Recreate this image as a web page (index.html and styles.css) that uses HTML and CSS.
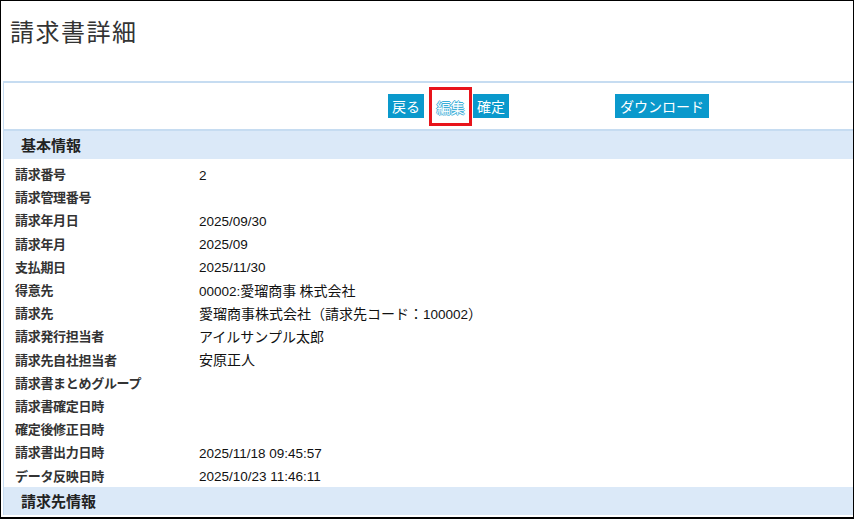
FILE: index.html
```html
<!DOCTYPE html>
<html lang="ja">
<head>
<meta charset="utf-8">
<title>請求書詳細</title>
<link rel="stylesheet" href="styles.css">
</head>
<body>
<div class="frame">
  <div class="title-area">
    <h1 class="page-title">請求書詳細</h1>
  </div>
  <div class="panel">
    <div class="toolbar">
      <span class="btn">戻る</span>
      <span class="highlight"><span class="btn btn-edit">編集</span></span>
      <span class="btn">確定</span>
      <span class="btn btn-download">ダウンロード</span>
    </div>
    <div class="section-head">基本情報</div>
    <div class="rows">
      <div class="row"><span class="label">請求番号</span><span class="value"><span class="num">2</span></span></div>
      <div class="row"><span class="label">請求管理番号</span><span class="value"></span></div>
      <div class="row"><span class="label">請求年月日</span><span class="value"><span class="num">2025/09/30</span></span></div>
      <div class="row"><span class="label">請求年月</span><span class="value"><span class="num">2025/09</span></span></div>
      <div class="row"><span class="label">支払期日</span><span class="value"><span class="num">2025/11/30</span></span></div>
      <div class="row"><span class="label">得意先</span><span class="value"><span class="num">00002:</span>愛瑠商事 株式会社</span></div>
      <div class="row"><span class="label">請求先</span><span class="value">愛瑠商事株式会社（請求先コード：<span class="num">100002</span>）</span></div>
      <div class="row"><span class="label">請求発行担当者</span><span class="value">アイルサンプル太郎</span></div>
      <div class="row"><span class="label">請求先自社担当者</span><span class="value">安原正人</span></div>
      <div class="row"><span class="label">請求書まとめグループ</span><span class="value"></span></div>
      <div class="row"><span class="label">請求書確定日時</span><span class="value"></span></div>
      <div class="row"><span class="label">確定後修正日時</span><span class="value"></span></div>
      <div class="row"><span class="label">請求書出力日時</span><span class="value"><span class="num">2025/11/18 09:45:57</span></span></div>
      <div class="row"><span class="label">データ反映日時</span><span class="value"><span class="num">2025/10/23 11:46:11</span></span></div>
    </div>
    <div class="section-head">請求先情報</div>
  </div>
</div>
</body>
</html>
```

FILE: styles.css
```css
html, body {
  margin: 0;
  padding: 0;
  background: #fff;
}

.frame {
  box-sizing: border-box;
  width: 854px;
  height: 519px;
  border: 1px solid #000;
  border-bottom-width: 2px;
  overflow: hidden;
  font-family: "Noto Sans CJK JP", "Liberation Sans", sans-serif;
  color: #222;
}

.title-area {
  height: 80px;
  padding-left: 9px;
  box-sizing: border-box;
}

.page-title {
  margin: 0;
  padding-top: 12px;
  font-size: 24px;
  line-height: 36px;
  font-weight: normal;
  letter-spacing: 1.5px;
  color: #333;
}

.panel {
  margin-left: 2px;
  border-top: 2px solid #c6dcf1;
  border-left: 1px solid #c6dcf1;
}

.toolbar {
  height: 46px;
  display: flex;
  align-items: center;
  padding-left: 384px;
  border-bottom: 2px solid #c6dcf1;
}

.btn {
  display: inline-block;
  background: #0a99cc;
  color: #fff;
  font-size: 14px;
  line-height: 24px;
  height: 24px;
  padding: 0 4px;
}

.highlight {
  display: inline-flex;
  align-items: center;
  justify-content: center;
  box-sizing: border-box;
  width: 43px;
  height: 39px;
  border: 3px solid #e8141b;
  margin: 1px 1px 0 5px;
}

.btn-edit {
  background: #fff;
  color: #ffffff;
  text-shadow: 1px 0 0 #3aaed8, -1px 0 0 #3aaed8, 0 1px 0 #3aaed8, 0 -1px 0 #3aaed8;
  padding: 0 2px;
}

.btn-download {
  margin-left: 106px;
  padding: 0 5px;
}

.section-head {
  height: 28px;
  line-height: 28px;
  background: #dbe9f8;
  padding-left: 17px;
  font-size: 15px;
  font-weight: bold;
  color: #222;
}

.rows {
  padding-top: 3px;
}

.row {
  display: grid;
  grid-template-columns: 184px 1fr;
  height: 23.2px;
  align-items: center;
  padding-left: 11px;
}

.label {
  font-size: 13px;
  font-weight: bold;
  color: #333;
  letter-spacing: -0.3px;
}

.value {
  font-size: 14px;
  color: #111;
}

.num {
  font-family: "Liberation Sans", sans-serif;
  font-size: 13.5px;
}
```
